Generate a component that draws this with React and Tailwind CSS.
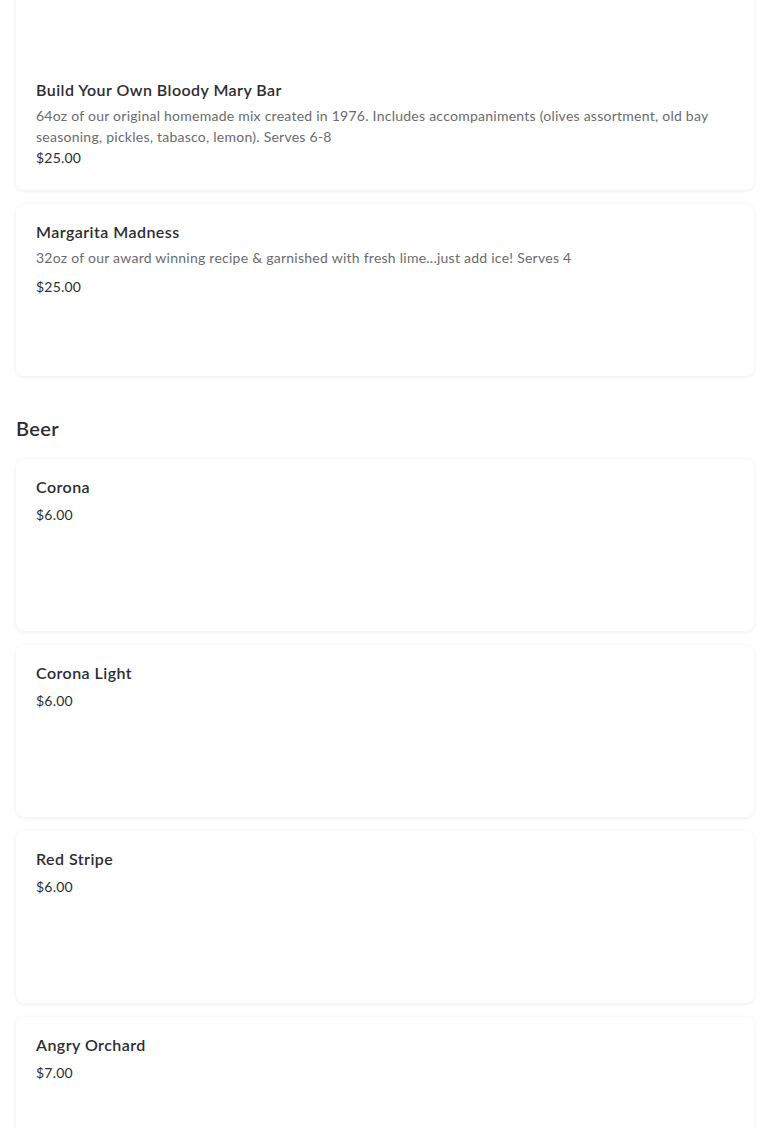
import React from "react";

const font = { fontFamily: '"Lato", "Liberation Sans", sans-serif' };

function Card({ name, desc, price, className = "", descClass = "", priceClass = "mt-1.5" }) {
  return (
    <div className={`bg-white rounded-lg shadow-[0_1px_4px_rgba(0,0,0,0.08)] px-5 pt-4 ${className}`}>
      <div className="text-[16px] leading-6 font-semibold text-[#2d2d33] tracking-[0.45px]">{name}</div>
      {desc && (
        <div className={`text-[14px] leading-[21px] text-[#6b6b70] tracking-[0.25px] ${descClass}`}>{desc}</div>
      )}
      <div className={`text-[14px] leading-5 text-[#2d2d33] tracking-[0.2px] ${priceClass}`}>{price}</div>
    </div>
  );
}

export default function App() {
  return (
    <div className="bg-white min-h-[1128px] overflow-hidden" style={font}>
      <div className="px-4 -mt-5 flex flex-col gap-[14px]">
        <Card
          className="pt-[98px] pb-[22px]"
          name="Build Your Own Bloody Mary Bar"
          desc="64oz of our original homemade mix created in 1976. Includes accompaniments (olives assortment, old bay seasoning, pickles, tabasco, lemon). Serves 6-8"
          descClass="mt-[3px]"
          priceClass="mt-[1px]"
          price="$25.00"
        />
        <Card
          className="h-[172px]"
          name="Margarita Madness"
          desc="32oz of our award winning recipe & garnished with fresh lime...just add ice! Serves 4"
          descClass="mt-[3px]"
          priceClass="mt-[9px]"
          price="$25.00"
        />
      </div>
      <div className="px-4 pt-[39px] pb-[18px] text-[20px] leading-[26px] font-semibold text-[#2d2d33] tracking-[0.4px]">Beer</div>
      <div className="px-4 flex flex-col gap-[14px]">
        <Card className="h-[172px]" name="Corona" price="$6.00" />
        <Card className="h-[172px]" name="Corona Light" price="$6.00" />
        <Card className="h-[172px]" name="Red Stripe" price="$6.00" />
        <Card className="h-[172px]" name="Angry Orchard" price="$7.00" />
      </div>
    </div>
  );
}
